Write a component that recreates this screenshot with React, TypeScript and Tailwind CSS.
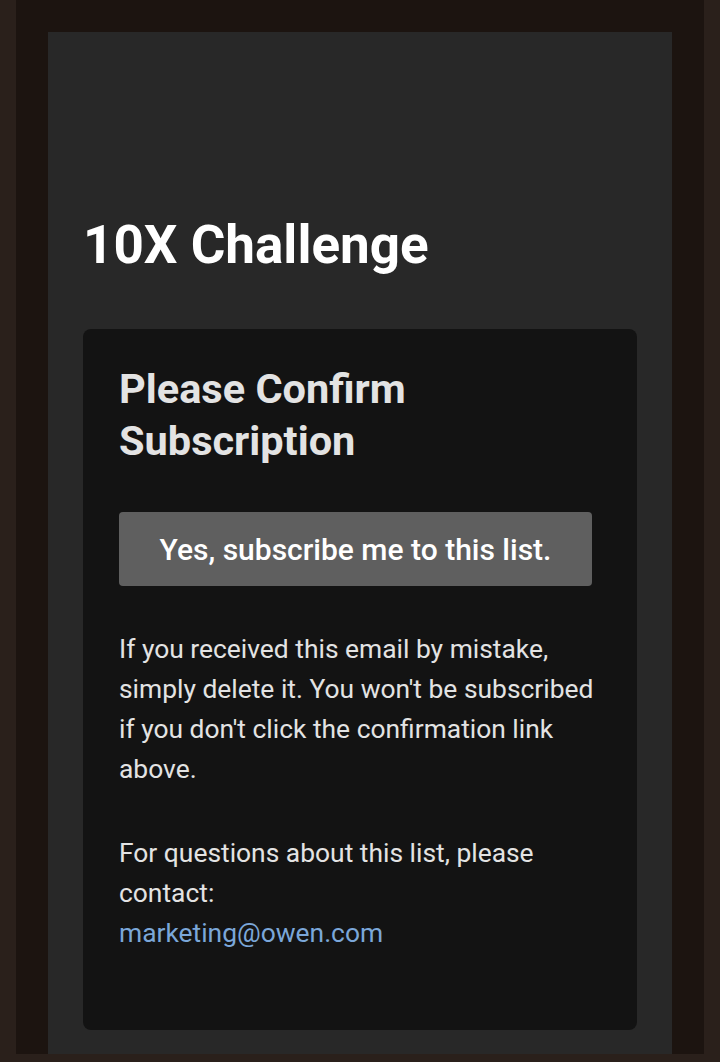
export default function App() {
  return (
    <div className="min-h-[1062px] bg-[#2a201b] px-4" style={{ fontFamily: "Roboto, 'Liberation Sans', sans-serif" }}>
      <div className="h-[1054px] bg-[#1c1410] px-8 pt-8">
        <div className="flex h-full flex-col bg-[#282828] px-[35px]">
          <h1 className="pt-[181px] text-[53px] font-bold leading-[64px] text-white">10X Challenge</h1>
          <div className="mt-[52px] rounded-lg bg-[#131313] px-9 pt-[34px] pb-[77px]">
            <h2 className="text-[41.5px] font-bold leading-[52px] text-[#e3e3e3]">Please Confirm Subscription</h2>
            <div className="mt-[45px] flex">
              <button className="flex h-[74px] w-[473px] items-center justify-center rounded bg-[#5f5f5f] text-[30px] font-medium text-white">
                Yes, subscribe me to this list.
              </button>
            </div>
            <p className="mt-[43px] text-[26.4px] leading-[40px] text-[#e3e3e3]">
              If you received this email by mistake, simply delete it. You won't be subscribed if you don't click the confirmation link above.
            </p>
            <p className="mt-[44px] text-[26.4px] leading-[40px] text-[#e3e3e3]">
              For questions about this list, please contact:
              <br />
              <a className="text-[#7ba7d9]">marketing@owen.com</a>
            </p>
          </div>
        </div>
      </div>
    </div>
  );
}
